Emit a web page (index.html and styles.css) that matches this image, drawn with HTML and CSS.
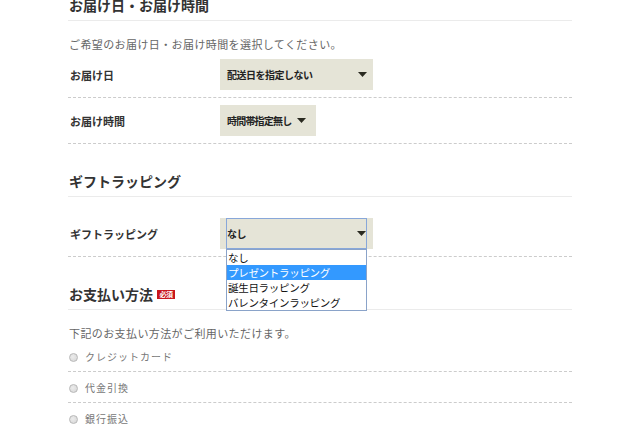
FILE: index.html
```html
<!DOCTYPE html>
<html lang="ja">
<head>
    <meta charset="UTF-8">
    <title>お届け・お支払い</title>
    <link rel="stylesheet" href="styles.css">
</head>
<body>
    <div class="container">
        <!-- Delivery date / time -->
        <section class="block">
            <h2 class="block-title">お届け日・お届け時間</h2>
            <p class="block-note">ご希望のお届け日・お届け時間を選択してください。</p>

            <div class="form-row">
                <div class="form-label">お届け日</div>
                <div class="select-wrap">
                    <div class="select select-wide">
                        <span>配送日を指定しない</span>
                        <svg class="arrow" width="9" height="5" viewBox="0 0 9 5"><path d="M0 0H9L4.5 5Z"/></svg>
                    </div>
                </div>
            </div>

            <div class="form-row">
                <div class="form-label">お届け時間</div>
                <div class="select-wrap">
                    <div class="select select-auto">
                        <span>時間帯指定無し</span>
                        <svg class="arrow" width="9" height="5" viewBox="0 0 9 5"><path d="M0 0H9L4.5 5Z"/></svg>
                    </div>
                </div>
            </div>
        </section>

        <!-- Gift wrapping -->
        <section class="block">
            <h2 class="block-title">ギフトラッピング</h2>
            <div class="block-space"></div>

            <div class="form-row">
                <div class="form-label">ギフトラッピング</div>
                <div class="select-wrap">
                    <div class="select select-wide focused">
                        <span>なし</span>
                        <svg class="arrow" width="9" height="5" viewBox="0 0 9 5"><path d="M0 0H9L4.5 5Z"/></svg>
                    </div>
                    <!-- open dropdown list -->
                    <ul class="dropdown">
                        <li>なし</li>
                        <li class="selected">プレゼントラッピング</li>
                        <li>誕生日ラッピング</li>
                        <li>バレンタインラッピング</li>
                    </ul>
                </div>
            </div>
        </section>

        <!-- Payment -->
        <section class="block">
            <h2 class="block-title">お支払い方法 <span class="badge">必須</span></h2>
            <p class="block-note note-pay">下記のお支払い方法がご利用いただけます。</p>

            <label class="radio-row"><span class="radio"></span>クレジットカード</label>
            <label class="radio-row"><span class="radio"></span>代金引換</label>
            <label class="radio-row"><span class="radio"></span>銀行振込</label>
        </section>
    </div>
</body>
</html>
```

FILE: styles.css
```css
* {
    margin: 0;
    padding: 0;
    box-sizing: border-box;
}

body {
    background: #fff;
    color: #333;
    font-family: "Noto Sans CJK JP", "Noto Sans", sans-serif;
    overflow: hidden;
}

.container {
    width: 504px;
    margin: -6px 0 0 68px;
}

.block + .block {
    margin-top: 26px;
}

.block-title {
    display: flex;
    align-items: center;
    font-size: 14px;
    line-height: 22px;
    font-weight: bold;
    color: #333;
    padding: 0 0 4px 1px;
    border-bottom: 1px solid #ebebeb;
}

.badge {
    display: inline-block;
    margin-left: 4px;
    width: 18px;
    height: 9px;
    line-height: 9px;
    background: #c8161d;
    color: #fff;
    font-size: 7px;
    text-align: center;
    letter-spacing: -0.5px;
}

.block-note {
    margin-top: 15px;
    font-size: 11px;
    line-height: 16px;
    color: #666;
    letter-spacing: 0.4px;
    padding-left: 1px;
}

.block-space {
    height: 14px;
}

.form-row {
    display: flex;
    align-items: center;
    padding: 7px 0;
    border-bottom: 1px dashed #ccc;
}

.form-label {
    width: 152px;
    padding-left: 2px;
    font-size: 11px;
    font-weight: bold;
    color: #333;
}

.select-wrap {
    position: relative;
    background: #e5e4d7;
    padding: 0 6px;
    height: 31px;
}

.select {
    display: flex;
    align-items: center;
    height: 31px;
    font-size: 10px;
    font-weight: bold;
    color: #222;
    letter-spacing: -0.5px;
    padding-left: 1px;
}

.select-wide {
    width: 141px;
    justify-content: space-between;
}

.select-auto {
    gap: 6px;
    padding-right: 4px;
    letter-spacing: -0.8px;
}

.select.focused {
    border: 1px solid #88a7d9;
    padding-left: 0;
}

.arrow {
    fill: #2a2a20;
    flex-shrink: 0;
}

.dropdown {
    position: absolute;
    left: 6px;
    top: 31px;
    width: 141px;
    list-style: none;
    background: #fff;
    border: 1px solid #8aa3c9;
}

.dropdown li {
    height: 15px;
    line-height: 15px;
    font-size: 10.5px;
    color: #111;
    padding-left: 1px;
    letter-spacing: -0.3px;
}

.dropdown li.selected {
    background: #3399ff;
    color: #fff;
}

.note-pay {
    margin-top: 15px;
}

.radio-row {
    display: flex;
    align-items: center;
    padding: 8px 0 6px 1px;
    font-size: 10px;
    line-height: 16px;
    color: #777;
    letter-spacing: 1px;
    border-bottom: 1px dashed #ccc;
}

.radio {
    width: 9px;
    height: 9px;
    margin-right: 7px;
    border-radius: 50%;
    border: 1px solid #b8b8b8;
    background: radial-gradient(circle at 40% 40%, #ececec, #d4d4d4);
}
```
